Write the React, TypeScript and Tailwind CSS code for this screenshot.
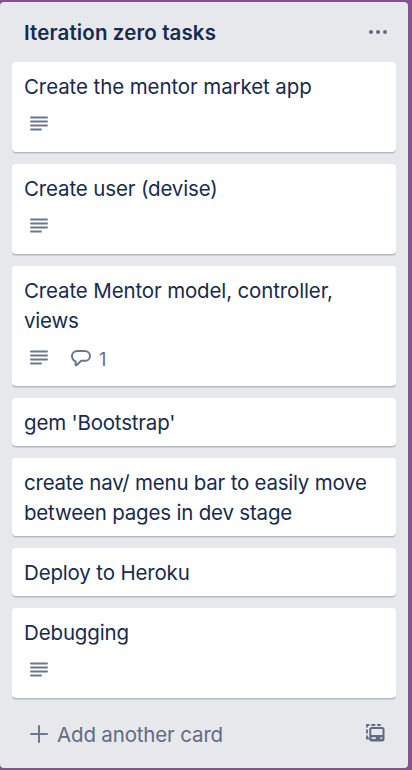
type Card = {
  lines: { text: string; tracking: string }[];
  description?: boolean;
  comments?: number;
};

const cards: Card[] = [
  { lines: [{ text: "Create the mentor market app", tracking: "tracking-[-0.1px]" }], description: true },
  { lines: [{ text: "Create user (devise)", tracking: "tracking-[-0.14px]" }], description: true },
  {
    lines: [
      { text: "Create Mentor model, controller,", tracking: "tracking-[-0.14px]" },
      { text: "views", tracking: "tracking-[-0.2px]" },
    ],
    description: true,
    comments: 1,
  },
  { lines: [{ text: "gem 'Bootstrap'", tracking: "tracking-[-0.19px]" }] },
  {
    lines: [
      { text: "create nav/ menu bar to easily move", tracking: "tracking-[-0.23px]" },
      { text: "between pages in dev stage", tracking: "tracking-[-0.19px]" },
    ],
  },
  { lines: [{ text: "Deploy to Heroku", tracking: "tracking-[-0.16px]" }] },
  { lines: [{ text: "Debugging", tracking: "tracking-[-0.14px]" }], description: true },
];

function DescriptionIcon() {
  return (
    <svg width="18" height="16" viewBox="0 0 18 16" fill="none" stroke="#6b778c" strokeWidth="1.9" strokeLinecap="round">
      <path d="M1 1.5h16M1 5.5h16M1 9.5h16M1 13.5h10" />
    </svg>
  );
}

function CommentIcon() {
  return (
    <svg width="22" height="19" viewBox="0 0 22 19" fill="none" stroke="#6b778c" strokeWidth="2" strokeLinejoin="round">
      <path d="M7.500 2h7c3.300 0 5.500 2.100 5.500 4.900s-2.200 4.900-5.500 4.900h-3.300L6.500 16.300 5.600 16V12.300C3.300 11.300 2 9.400 2 6.900 2 4.100 4.200 2 7.500 2Z" />
    </svg>
  );
}

function TemplateIcon() {
  return (
    <svg width="20" height="20" viewBox="0 0 20 20" fill="none" stroke="#5e6c84">
      <path d="M2 4.500V2h2.500M6.300 2h4M12.200 2h3.600M2 6.500v4M2 12.500V15.500h2" strokeWidth="1.8" />
      <rect x="5.300" y="5" width="13.200" height="12.500" rx="1.500" strokeWidth="2" />
      <path
        d="M5 12h14v6H5zM6.500 14.300v1.700h4.300v-1.700zM15.300 14.300v1.700h2v-1.700z"
        fill="#5e6c84"
        fillRule="evenodd"
        stroke="none"
      />
    </svg>
  );
}

function CardItem({ card }: { card: Card }) {
  return (
    <li className="rounded-[4px] bg-white px-3 pt-[10px] pb-2 shadow-[0_1.5px_0_#b3bac5]">
      {card.lines.map((line) => (
        <p key={line.text} className={`whitespace-nowrap ${line.tracking}`}>
          {line.text}
        </p>
      ))}
      {card.description && (
        <div className="flex h-[42px] items-start pt-[14px] pl-[6px] text-[#5e6c84]">
          <DescriptionIcon />
          {card.comments && (
            <div className="-mt-px ml-[22px] flex items-start">
              <CommentIcon />
              <span className="ml-[7px] text-[18px] leading-[22px]">{card.comments}</span>
            </div>
          )}
        </div>
      )}
    </li>
  );
}

export default function App() {
  return (
    <main className="h-[770px] w-[412px] overflow-hidden bg-[#80558f] pt-[2px] font-['Inter',sans-serif] text-[20.5px] leading-[30px] text-[#172b4d]">
      <section className="h-[766px] w-[408px] rounded-[4px] bg-[#e7e8ec]">
        <header className="flex h-[60px] items-center justify-between pr-[21px] pl-6">
          <h2 className="pt-[2px] font-semibold tracking-[0.12px]">Iteration zero tasks</h2>
          <svg width="18" height="4" viewBox="0 0 18 4" fill="#5e6c84">
            <circle cx="2" cy="2" r="2" />
            <circle cx="9" cy="2" r="2" />
            <circle cx="16" cy="2" r="2" />
          </svg>
        </header>
        <ul className="flex flex-col gap-3 px-3">
          {cards.map((card) => (
            <CardItem key={card.lines[0].text} card={card} />
          ))}
        </ul>
        <footer className="flex items-start justify-between pt-[22px] pr-[23px] pl-[30px] text-[#5e6c84]">
          <div className="flex items-start">
            <svg className="mt-[5px]" width="18" height="18" viewBox="0 0 18 18" stroke="#6b778c" strokeWidth="2" strokeLinecap="round">
              <path d="M9 1v16M1 9h16" />
            </svg>
            <span className="ml-[9px] tracking-[-0.16px]">Add another card</span>
          </div>
          <div className="pt-[3px]">
            <TemplateIcon />
          </div>
        </footer>
      </section>
    </main>
  );
}
